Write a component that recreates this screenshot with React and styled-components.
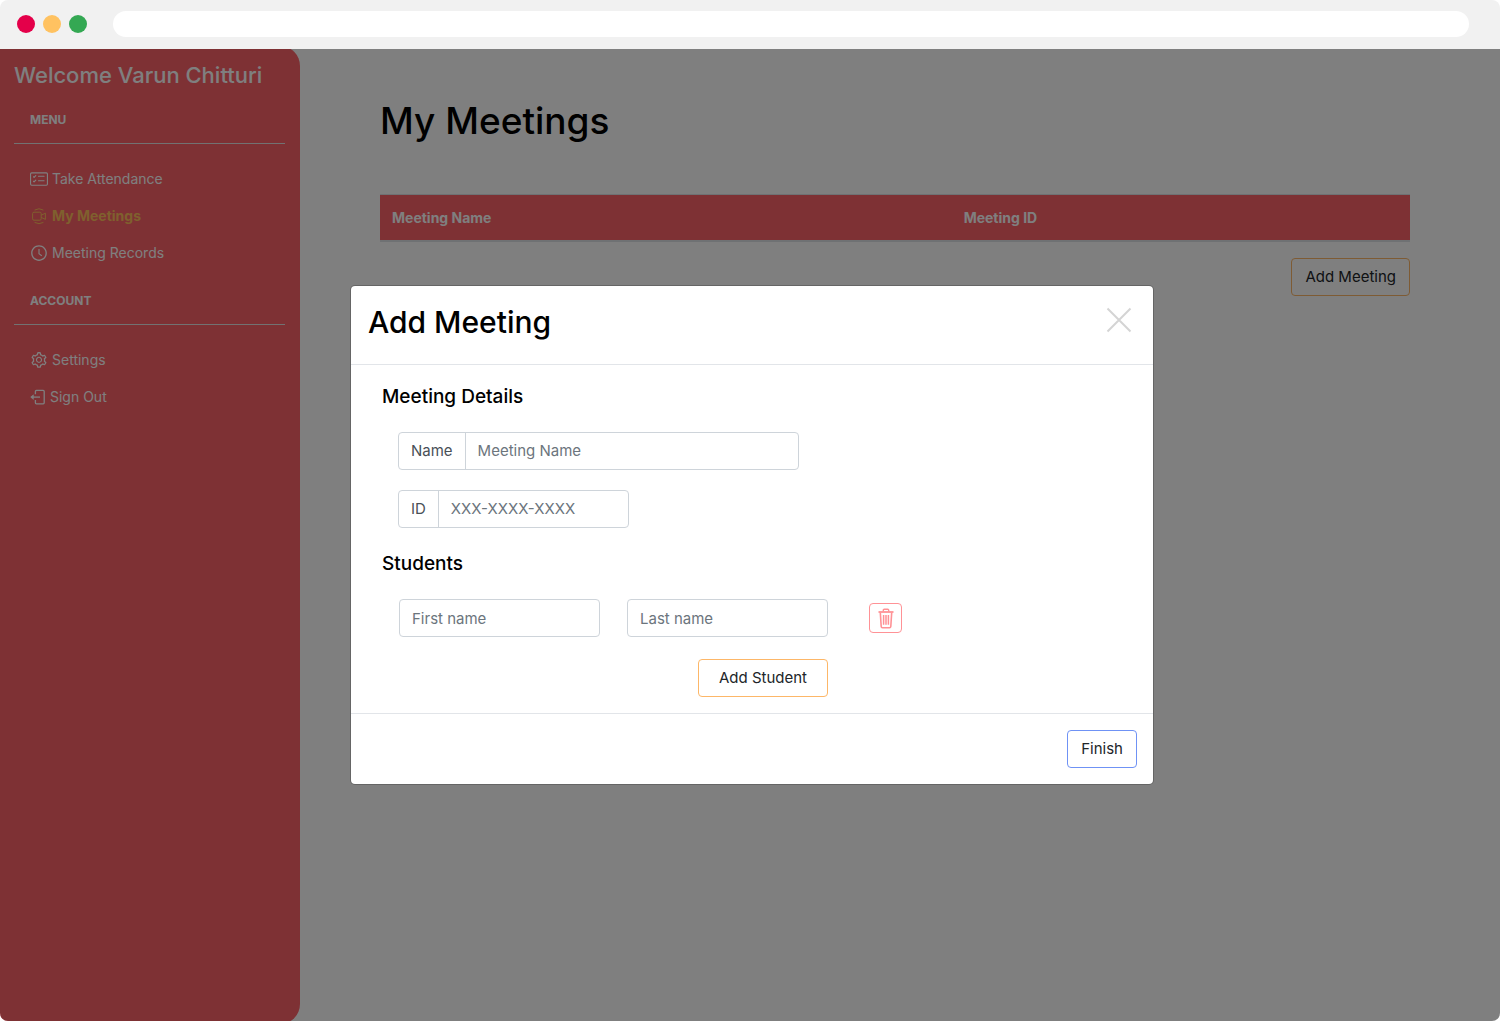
import React from "react";
import styled, { createGlobalStyle, css } from "styled-components";
import { BsCardChecklist } from "react-icons/bs";
import { AiOutlineClockCircle, AiOutlineSetting } from "react-icons/ai";

const GlobalStyle = createGlobalStyle`
  *, *::before, *::after { box-sizing: border-box; }
  body {
    margin: 0;
    background: #fff;
    color: #000;
    font-family: Inter, "Liberation Sans", sans-serif;
    font-size: 15px;
    line-height: 24px;
  }
  h1, h2, h3, ul { margin: 0; padding: 0; }
  button, input { font: inherit; }
`;

const Browser = styled.div`
  display: flex;
  flex-direction: column;
  min-height: calc(100vh - 2px);
  overflow: hidden;
  border-radius: 8px;
`;

const BrowserBar = styled.header`
  display: flex;
  align-items: center;
  height: 49px;
  padding: 0 31px 2px 17px;
  background: #f1f1f1;
`;

const Lights = styled.div`
  display: flex;
  gap: 8px;
  margin-right: 26px;
`;

const Light = styled.span`
  width: 18px;
  height: 18px;
  border-radius: 50%;
  background: ${(p) => p.$color};
`;

const AddressBar = styled.input`
  flex: 1;
  height: 26px;
  padding: 0 16px;
  border: 0;
  border-radius: 13px;
  background: #fff;
`;

const Viewport = styled.div`
  position: relative;
  display: flex;
  flex: 1;
  overflow: hidden;
`;

const Sidebar = styled.aside`
  display: flex;
  flex-direction: column;
  gap: 21px;
  width: 300px;
  margin: -3px 0;
  padding: 14px 15px 14px 14px;
  border-radius: 0 20px 20px 0;
  background: #fc6269;
  color: #fff;
`;

const Welcome = styled.h2`
  font-size: 22px;
  font-weight: 500;
  line-height: 30px;
  white-space: nowrap;
`;

const SectionLabel = styled.h3`
  padding: 0 16px 14px;
  border-bottom: 1px solid #e4e4e4;
  font-size: 12px;
  font-weight: 700;
  line-height: 18px;
`;

const NavList = styled.ul`
  margin-top: 16px;
  list-style: none;
`;

const NavLink = styled.a`
  display: flex;
  align-items: center;
  gap: 4px;
  padding: 8px 16px;
  color: ${(p) => (p.$active ? "#ffc05c" : "#fff")};
  font-size: 14px;
  font-weight: ${(p) => (p.$active ? 700 : 400)};
  line-height: 21px;
  text-decoration: none;

  svg { flex: none; }
`;

const Main = styled.main`
  flex: 1;
  display: flex;
  flex-direction: column;
  padding: 48px 90px 48px 80px;
`;

const PageTitle = styled.h1`
  margin-bottom: 49px;
  font-size: 37px;
  font-weight: 500;
  line-height: 48px;
`;

const MeetingTable = styled.table`
  width: 100%;
  margin-bottom: 16px;
  border-spacing: 0;
  table-layout: fixed;
`;

const HeadCell = styled.th`
  width: ${(p) => p.$width};
  padding: 12px;
  border-top: 1px solid #dee2e6;
  border-bottom: 2px solid #dee2e6;
  background: #fc6269;
  color: #fff;
  font-size: 14px;
  font-weight: 700;
  line-height: 21px;
  text-align: left;
`;

const tones = { orange: "#fdb768", blue: "#6f92f5", red: "#ff9296" };

const Button = styled.button`
  height: 38px;
  padding: 0 ${(p) => (p.$wide ? 20 : 13)}px;
  border: 1px solid ${(p) => tones[p.$tone]};
  border-radius: 4px;
  background: transparent;
  color: #212529;
  white-space: nowrap;
  ${(p) => p.$end && css`align-self: flex-end;`}
`;

const Backdrop = styled.div`
  position: absolute;
  inset: 0;
  display: flex;
  align-items: center;
  justify-content: center;
  padding: 16px 14px 16px 18px;
  background: rgba(0, 0, 0, 0.5);
`;

const Dialog = styled.section`
  width: 100%;
  max-width: 804px;
  border: 1px solid rgba(0, 0, 0, 0.2);
  border-radius: 5px;
  background: #fff;
  background-clip: padding-box;
`;

const DialogHeader = styled.div`
  display: flex;
  align-items: flex-start;
  justify-content: space-between;
  padding: 17px 21px 23px 17px;
  border-bottom: 1px solid #e2e5e9;
`;

const DialogTitle = styled.h2`
  font-size: 30px;
  font-weight: 500;
  line-height: 38px;
`;

const CloseButton = styled.button`
  display: flex;
  padding: 4px 0;
  border: 0;
  background: none;
  color: #d4d4d4;
`;

const DialogBody = styled.div`
  display: flex;
  flex-direction: column;
  align-items: flex-start;
  padding: 20px 31px 16px;
`;

const GroupTitle = styled.h3`
  margin-bottom: 23px;
  font-size: 19px;
  font-weight: 500;
  line-height: 24px;
`;

const Details = styled.div`
  display: flex;
  flex-direction: column;
  gap: 20px;
  margin-bottom: 24px;
  padding-left: 16px;
`;

const InputGroup = styled.div`
  display: flex;
  width: ${(p) => p.$width};
  height: 38px;
  border: 1px solid #ced4da;
  border-radius: 4px;
`;

const Addon = styled.label`
  padding: 6px 12px;
  border-right: 1px solid #ced4da;
  color: #495057;
`;

const inputText = css`
  min-width: 0;
  padding: 0 12px;
  background: transparent;
  color: #495057;
  &::placeholder { color: #6c757d; opacity: 1; }
`;

const GroupInput = styled.input`
  ${inputText}
  flex: 1;
  border: 0;
`;

const TextInput = styled.input`
  ${inputText}
  width: 100%;
  height: 38px;
  border: 1px solid #ced4da;
  border-radius: 4px;
`;

const StudentGrid = styled.div`
  display: grid;
  grid-template-columns: 201px 201px auto;
  align-items: center;
  justify-items: end;
  gap: 22px 27px;
  padding-left: 17px;
`;

const DeleteButton = styled.button`
  display: flex;
  align-items: center;
  justify-content: center;
  width: 33px;
  height: 30px;
  margin-left: 14px;
  padding: 0;
  border: 1px solid ${tones.red};
  border-radius: 4px;
  background: transparent;
  color: ${tones.red};
`;

const AddStudentCell = styled.div`
  display: flex;
  grid-column: 2;
`;

const DialogFooter = styled.div`
  display: flex;
  justify-content: flex-end;
  padding: 16px;
  border-top: 1px solid #e2e5e9;
`;

const MeetingIcon = () => (
  <svg width="18" height="18" viewBox="0 0 18 18" fill="none" stroke="currentColor" aria-hidden="true">
    <rect x="2.6" y="5.2" width="8.6" height="8" rx="1.4" />
    <path d="M11.2 8.2 15.4 6.2v6.2L11.2 10.4M4.6 3.1Q9 .4 13.4 3.1M4.6 15.4Q9 18 13.4 15.4" strokeLinejoin="round" />
  </svg>
);

const SignOutIcon = () => (
  <svg width="16" height="18" viewBox="0 0 16 18" fill="none" stroke="currentColor" strokeWidth="1.3" aria-hidden="true">
    <path d="M5.400 6.200V3.400q0-1 1-1h6.800q1 0 1 1v11.400q0 1-1 1H6.400q-1 0-1-1V12" />
    <path d="M1.200 9.100H10" />
    <path d="M3.400 6.800.7 9.100l2.700 2.300z" fill="currentColor" strokeWidth=".6" />
  </svg>
);

const CloseIcon = () => (
  <svg width="26" height="26" viewBox="0 0 26 26" stroke="currentColor" strokeWidth="2" aria-hidden="true">
    <path d="M1.5 1.5l23 23M24.5 1.5l-23 23" />
  </svg>
);

const TrashIcon = () => (
  <svg width="18" height="21" viewBox="0 0 18 21" fill="none" stroke="currentColor" aria-hidden="true">
    <path d="M1.500 4h15" strokeWidth="1.8" />
    <path d="M6.300 3.500V2.200q0-.9.900-.9h3.600q.9 0 .9.900v1.300" strokeWidth="1.4" />
    <path d="M3.300 4.500l.9 14q.1 1.200 1.200 1.200h7.200q1.100 0 1.200-1.200l.9-14" strokeWidth="1.6" />
    <path d="M6.600 7v9.700M9 7v9.700M11.400 7v9.700" strokeWidth="1.5" />
  </svg>
);

const iconProps = { size: 18, "aria-hidden": true };

const sections = [
  {
    label: "MENU",
    items: [
      { text: "Take Attendance", icon: <BsCardChecklist {...iconProps} /> },
      { text: "My Meetings", icon: <MeetingIcon />, active: true },
      { text: "Meeting Records", icon: <AiOutlineClockCircle {...iconProps} /> },
    ],
  },
  {
    label: "ACCOUNT",
    items: [
      { text: "Settings", icon: <AiOutlineSetting {...iconProps} /> },
      { text: "Sign Out", icon: <SignOutIcon /> },
    ],
  },
];

export default function App() {
  return (
    <>
      <GlobalStyle />
      <Browser>
        <BrowserBar>
          <Lights>
            <Light $color="#e4004a" />
            <Light $color="#ffc261" />
            <Light $color="#34a853" />
          </Lights>
          <AddressBar type="text" aria-label="Address" />
        </BrowserBar>
        <Viewport>
          <Sidebar>
            <Welcome>Welcome Varun Chitturi</Welcome>
            {sections.map((section) => (
              <nav key={section.label} aria-label={section.label}>
                <SectionLabel>{section.label}</SectionLabel>
                <NavList>
                  {section.items.map((item) => (
                    <li key={item.text}>
                      <NavLink href="#" $active={item.active}>
                        {item.icon}
                        {item.text}
                      </NavLink>
                    </li>
                  ))}
                </NavList>
              </nav>
            ))}
          </Sidebar>
          <Main>
            <PageTitle>My Meetings</PageTitle>
            <MeetingTable>
              <thead>
                <tr>
                  <HeadCell scope="col" $width="55.5%">Meeting Name</HeadCell>
                  <HeadCell scope="col" $width="44.5%">Meeting ID</HeadCell>
                </tr>
              </thead>
            </MeetingTable>
            <Button type="button" $tone="orange" $end>Add Meeting</Button>
          </Main>
          <Backdrop>
            <Dialog role="dialog" aria-modal="true" aria-labelledby="dialog-title">
              <DialogHeader>
                <DialogTitle id="dialog-title">Add Meeting</DialogTitle>
                <CloseButton type="button" aria-label="Close">
                  <CloseIcon />
                </CloseButton>
              </DialogHeader>
              <DialogBody>
                <GroupTitle>Meeting Details</GroupTitle>
                <Details>
                  <InputGroup $width="401px">
                    <Addon htmlFor="meeting-name">Name</Addon>
                    <GroupInput id="meeting-name" type="text" placeholder="Meeting Name" />
                  </InputGroup>
                  <InputGroup $width="231px">
                    <Addon htmlFor="meeting-id">ID</Addon>
                    <GroupInput id="meeting-id" type="text" placeholder="XXX-XXXX-XXXX" />
                  </InputGroup>
                </Details>
                <GroupTitle>Students</GroupTitle>
                <StudentGrid>
                  <TextInput type="text" placeholder="First name" aria-label="First name" />
                  <TextInput type="text" placeholder="Last name" aria-label="Last name" />
                  <DeleteButton type="button" aria-label="Remove student">
                    <TrashIcon />
                  </DeleteButton>
                  <AddStudentCell>
                    <Button type="button" $tone="orange" $wide>Add Student</Button>
                  </AddStudentCell>
                </StudentGrid>
              </DialogBody>
              <DialogFooter>
                <Button type="button" $tone="blue">Finish</Button>
              </DialogFooter>
            </Dialog>
          </Backdrop>
        </Viewport>
      </Browser>
    </>
  );
}
